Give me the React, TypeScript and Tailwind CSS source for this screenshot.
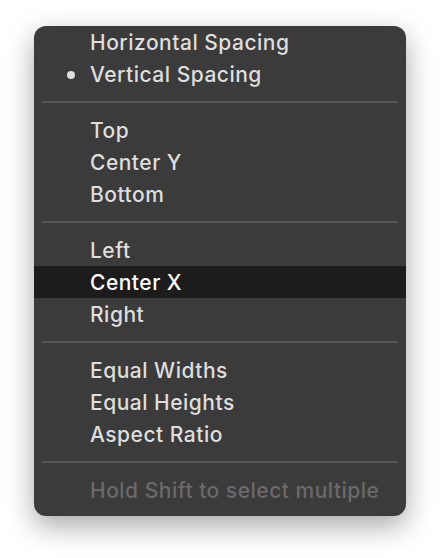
const GROUPS = [
  [
    { label: 'Horizontal Spacing' },
    { label: 'Vertical Spacing', checked: true },
  ],
  [{ label: 'Top' }, { label: 'Center Y' }, { label: 'Bottom' }],
  [{ label: 'Left' }, { label: 'Center X', active: true }, { label: 'Right' }],
  [{ label: 'Equal Widths' }, { label: 'Equal Heights' }, { label: 'Aspect Ratio' }],
];

type Item = { label: string; checked?: boolean; active?: boolean };

function Row({ item }: { item: Item }) {
  return (
    <div
      className={`relative flex h-8 items-center pl-14 pt-[2px] ${
        item.active ? 'bg-[#1c1c1c] text-white' : 'text-[#dedede]'
      }`}
    >
      {item.checked && (
        <span className="absolute left-[33px] top-[13px] h-[8px] w-[8px] rounded-full bg-[#dedede]" />
      )}
      {item.label}
    </div>
  );
}

function Separator() {
  return <div className="mx-2 my-[11px] h-[2px] bg-[#575757]" />;
}

export default function App() {
  return (
    <div className="h-[558px] w-[440px] bg-white pl-[34px] pt-[26px]">
      <div
        className="flex w-[372px] flex-col overflow-hidden rounded-[12px] bg-[#3b3b3b] text-[21px] font-medium tracking-[0.5px] shadow-[0_10px_28px_rgba(0,0,0,0.35)]"
        style={{ fontFamily: 'Inter, "Liberation Sans", Arial, sans-serif' }}
      >
        {GROUPS.map((group, i) => (
          <div key={i}>
            {i > 0 && <Separator />}
            {group.map((item) => (
              <Row key={item.label} item={item} />
            ))}
          </div>
        ))}
        <Separator />
        <div className="flex h-8 items-center pl-14 pt-[2px] text-[#6a6a6a]">Hold Shift to select multiple</div>
        <div className="h-[10px]" />
      </div>
    </div>
  );
}
